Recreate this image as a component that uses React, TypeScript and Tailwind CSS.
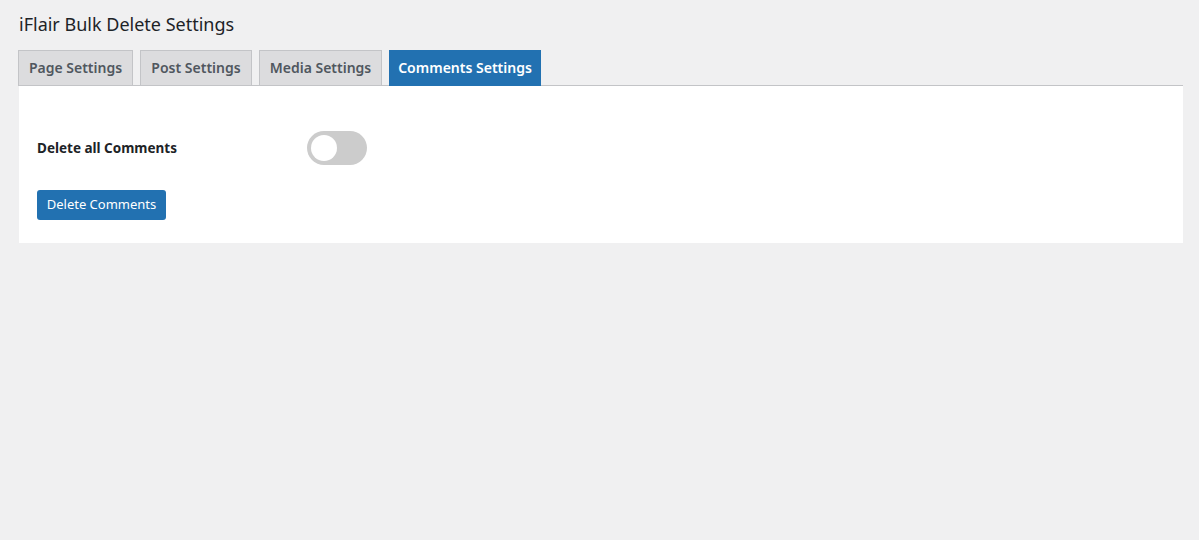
import { useState } from "react";

const tabs = [
  { label: "Page Settings", width: "w-[115px]" },
  { label: "Post Settings", width: "w-[112px]" },
  { label: "Media Settings", width: "w-[123px]" },
  { label: "Comments Settings", width: "w-[152px]" },
];

export default function App() {
  const [active, setActive] = useState(3);
  const [enabled, setEnabled] = useState(false);

  return (
    <div className="min-h-[540px] bg-[#f0f0f1] pl-[18px] pr-[16px] pt-[13px] font-['Noto_Sans',sans-serif] text-[#1d2327]">
      <h1 className="pl-px text-[18px] leading-[22px] font-normal text-[#1d2327]">iFlair Bulk Delete Settings</h1>

      <nav className="mt-[15px] flex gap-[7px] border-b border-[#c3c4c7]">
        {tabs.map((tab, i) => (
          <button
            key={tab.label}
            type="button"
            onClick={() => setActive(i)}
            className={`${tab.width} -mb-px h-[36px] border text-center text-[14px] font-semibold leading-[34px] ${
              active === i
                ? "border-[#2271b1] bg-[#2271b1] text-white"
                : "border-[#c3c4c7] bg-[#dcdcde] text-[#50575e]"
            }`}
          >
            {tab.label}
          </button>
        ))}
      </nav>

      <section className="ml-px bg-white px-[18px] pb-[23px] pt-[45px]">
        <div className="flex items-center">
          <span className="w-[270px] text-[13.5px] leading-[18px] font-bold text-[#1d2327]">Delete all Comments</span>
          <button
            type="button"
            onClick={() => setEnabled(!enabled)}
            className={`flex h-[34px] w-[60px] items-center rounded-full px-[4px] ${
              enabled ? "justify-end bg-[#2271b1]" : "justify-start bg-[#cccccc]"
            }`}
          >
            <span className="h-[26px] w-[26px] rounded-full bg-white" />
          </button>
        </div>
        <button
          type="button"
          className="mt-[25px] h-[30px] w-[129px] rounded-[3px] bg-[#2271b1] text-[13px] text-white"
        >
          Delete Comments
        </button>
      </section>
    </div>
  );
}
